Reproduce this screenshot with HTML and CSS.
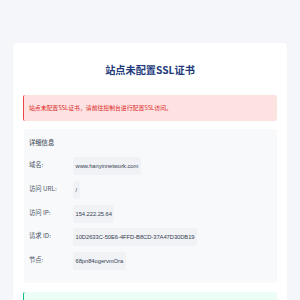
FILE: index.html
```html
<!DOCTYPE html>
<html lang="zh-CN">
<head>
<meta charset="utf-8">
<title>站点未配置SSL证书</title>
<link rel="stylesheet" href="styles.css">
</head>
<body>
<div class="card">
  <h1 class="title">站点未配置SSL证书</h1>
  <div class="alert">站点未配置SSL证书，请前往控制台进行配置SSL访问。</div>
  <div class="details">
    <div class="details-title">详细信息</div>
    <div class="rows">
      <div class="label">域名:</div><div class="value-wrap"><span class="value">www.hanyinnetwork.com</span></div>
      <div class="label">访问 URL:</div><div class="value-wrap"><span class="value">/</span></div>
      <div class="label">访问 IP:</div><div class="value-wrap"><span class="value">154.222.25.64</span></div>
      <div class="label">请求 ID:</div><div class="value-wrap"><span class="value">10D2633C-50E6-4FFD-B8CD-37A47D30DB19</span></div>
      <div class="label">节点:</div><div class="value-wrap"><span class="value">68pn84ogervmOra</span></div>
    </div>
  </div>
  <div class="tip"></div>
</div>
</body>
</html>
```
FILE: styles.css
```css
html, body {
  margin: 0;
  padding: 0;
}
body {
  background: #f5f6fa;
  font-family: "Liberation Sans", "Noto Sans CJK SC", sans-serif;
  padding: 43px 13px 0;
  height: 300px;
  box-sizing: border-box;
  overflow: hidden;
}
.card {
  background: #ffffff;
  border-radius: 4px;
  padding: 18px 10px 20px;
  box-shadow: 0 0 1px rgba(0,0,0,0.04);
}
.title {
  margin: 0;
  text-align: center;
  font-family: "Noto Sans CJK SC", sans-serif;
  font-size: 10.2px;
  font-weight: 700;
  line-height: 18px;
  color: #223a7a;
}
.alert {
  margin-top: 16px;
  background: #fde2e2;
  border-left: 1px solid #ef4444;
  border-radius: 2px;
  height: 26px;
  line-height: 26px;
  padding-left: 5px;
  font-family: "Noto Sans CJK SC", sans-serif;
  font-size: 5.85px;
  color: #dc2626;
}
.details {
  margin: 8px 0 0 1px;
  background: #f8f9fb;
  border-radius: 3px;
  padding: 9px 5px 13px;
}
.details-title {
  font-family: "Noto Sans CJK SC", sans-serif;
  font-size: 6.3px;
  font-weight: 500;
  line-height: 10px;
  color: #4b5563;
}
.rows {
  margin-top: 9px;
  display: grid;
  grid-template-columns: 44px 1fr;
  row-gap: 5.8px;
  align-items: center;
}
.label {
  font-family: "Noto Sans CJK SC", sans-serif;
  font-size: 6.3px;
  color: #4b5563;
  line-height: 10px;
  margin-top: -2px;
}
.value-wrap {
  display: flex;
}
.value {
  display: block;
  background: #f0f2f6;
  border-radius: 2px;
  height: 18px;
  line-height: 18px;
  padding: 0 2.5px;
  font-family: "Liberation Sans", sans-serif;
  font-size: 5.8px;
  color: #374151;
  letter-spacing: -0.05px;
}
.tip {
  margin-top: 9px;
  height: 30px;
  background: #ecfdf5;
  border-left: 1px solid #10b981;
  border-radius: 2px;
}
```
